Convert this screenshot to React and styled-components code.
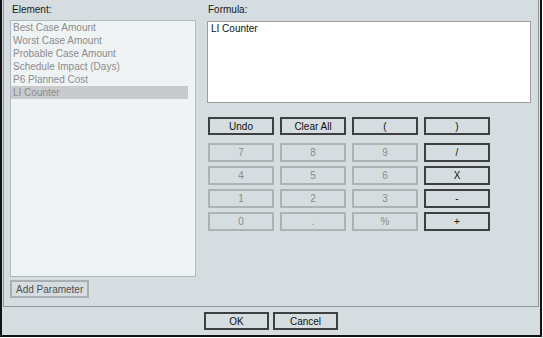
import React from "react";
import styled, { createGlobalStyle } from "styled-components";

const Global = createGlobalStyle`
  html, body { margin: 0; padding: 0; background: #ffffff; }
  * { box-sizing: border-box; }
  body { font-family: "Liberation Sans", Arial, sans-serif; font-size: 10px; }
`;

const Window = styled.div`
  width: 542px;
  height: 337px;
  background: #d5dde0;
  border: 2px solid #141414;
  border-top: none;
  display: flex;
  flex-direction: column;
`;

const Panel = styled.div`
  height: 307px;
  margin: 0 1px;
  border: 1px solid #8e989c;
  border-top: none;
  padding: 3px 6px 0 6px;
  display: flex;
  gap: 11px;
`;

const Column = styled.div`
  width: ${(p) => p.$w}px;
  display: flex;
  flex-direction: column;
`;

const Label = styled.div`
  line-height: 13px;
  height: 13px;
  color: #1a1a1a;
  padding-left: ${(p) => p.$pl || 0}px;
  margin-bottom: ${(p) => p.$mb}px;
`;

const List = styled.div`
  height: 257px;
  background: #eff3f4;
  border: 1px solid #b3babd;
  padding: 0;
`;

const Item = styled.div`
  width: 177px;
  height: 13px;
  line-height: 13px;
  padding-left: 2px;
  color: #8c8c8c;
  white-space: nowrap;
  background: ${(p) => (p.$selected ? "#c8cacb" : "transparent")};
`;

const FormulaBox = styled.div`
  height: 82px;
  background: #ffffff;
  border: 1px solid #9a9fa2;
  padding: 0 3px;
  line-height: 13px;
  color: #111;
`;

const Grid = styled.div`
  margin-top: 14px;
  margin-left: 1px;
  display: grid;
  grid-template-columns: repeat(4, 66px);
  column-gap: 6px;
  row-gap: 4px;
`;

const Btn = styled.button`
  height: ${(p) => p.$h || 19}px;
  width: ${(p) => (p.$w ? `${p.$w}px` : "auto")};
  padding: 0;
  font-family: "Liberation Sans", Arial, sans-serif;
  font-size: 10px;
  background: #d5dde0;
  border: 2px solid ${(p) => (p.$disabled ? "#adb3b5" : "#3d3f40")};
  color: ${(p) => (p.$disabled ? "#8a8a8a" : "#111111")};
  cursor: default;
`;

const FirstRow = styled.div`
  grid-column: 1 / -1;
  display: grid;
  grid-template-columns: repeat(4, 66px);
  column-gap: 6px;
  margin-bottom: 4px;
`;

const AddBtn = styled(Btn)`
  margin-top: 3px;
  align-self: flex-start;
  height: 18px;
  padding: 0 4px;
  color: #505050;
  border-color: #a9afb2;
`;

const Footer = styled.div`
  flex: 1;
  display: flex;
  justify-content: center;
  align-items: center;
  gap: 4px;
`;

const items = [
  "Best Case Amount",
  "Worst Case Amount",
  "Probable Case Amount",
  "Schedule Impact (Days)",
  "P6 Planned Cost",
  "LI Counter",
];

const keys = [
  ["7", true], ["8", true], ["9", true], ["/", false],
  ["4", true], ["5", true], ["6", true], ["X", false],
  ["1", true], ["2", true], ["3", true], ["-", false],
  ["0", true], [".", true], ["%", true], ["+", false],
];

export default function App() {
  return (
    <>
      <Global />
      <Window>
        <Panel>
          <Column $w={186}>
            <Label $pl={2} $mb={4}>Element:</Label>
            <List>
              {items.map((t) => (
                <Item key={t} $selected={t === "LI Counter"}>{t}</Item>
              ))}
            </List>
            <AddBtn $disabled>Add Parameter</AddBtn>
          </Column>
          <Column $w={324}>
            <Label $pl={1} $mb={5}>Formula:</Label>
            <FormulaBox>LI Counter</FormulaBox>
            <Grid>
              <FirstRow>
                <Btn $h={18}>Undo</Btn>
                <Btn $h={18}>Clear All</Btn>
                <Btn $h={18}>(</Btn>
                <Btn $h={18}>)</Btn>
              </FirstRow>
              {keys.map(([k, d]) => (
                <Btn key={k} $disabled={d}>{k}</Btn>
              ))}
            </Grid>
          </Column>
        </Panel>
        <Footer>
          <Btn $w={65} $h={18}>OK</Btn>
          <Btn $w={65} $h={18}>Cancel</Btn>
        </Footer>
      </Window>
    </>
  );
}
